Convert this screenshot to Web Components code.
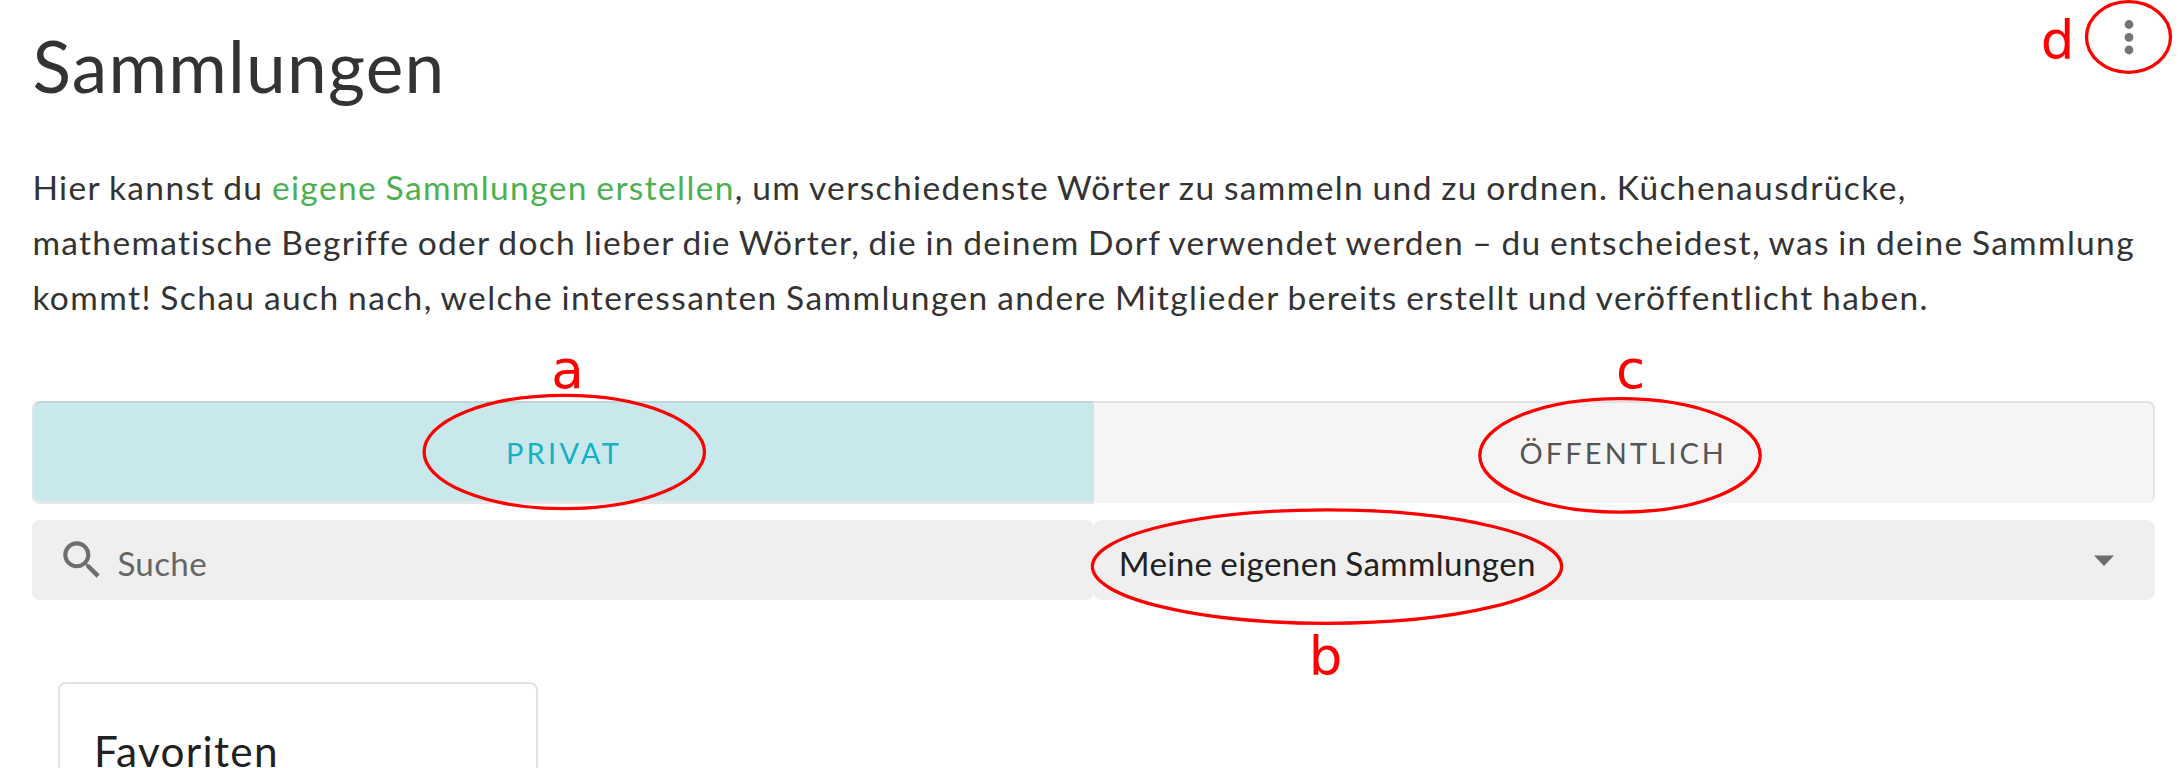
<!DOCTYPE html>
<html lang="de"><head><meta charset="utf-8"><title>Sammlungen</title>
<style>html,body{margin:0;background:#fff;overflow:hidden}body{width:2183px;height:768px;font-family:Lato,"Open Sans",sans-serif;color:#333;position:relative}</style></head>
<body><sammlungen-page></sammlungen-page>
<script>
const define=(name,html)=>customElements.define(name,class extends HTMLElement{
  constructor(){super();this.attachShadow({mode:'open'}).innerHTML=html;}
});
define('page-header',`<style>:host{display:flex;justify-content:space-between;height:134px}
h1{margin:24px 0 0 0;font-size:71.2px;line-height:84px;font-weight:400;letter-spacing:1.25px;color:#333}
svg{display:block;margin:18px 4px 0 0}</style>
<h1><slot></slot></h1><svg width="40" height="40" fill="#757575"><circle cx="18" cy="6.5" r="4.4"/><circle cx="18" cy="19.3" r="4.4"/><circle cx="18" cy="32" r="4.4"/></svg>`);
define('intro-text',`<style>:host{display:block;height:168.5px;margin:25.5px 0 0 0;font-size:33.5px;line-height:55.3px;color:#333;white-space:nowrap}</style><slot></slot>`);
define('text-line',`<style>:host{display:block;word-spacing:-1.5px;letter-spacing:1.38px}:host([tight]){letter-spacing:1.325px}:host([wide]){letter-spacing:1.41px}</style><slot></slot>`);
define('green-link',`<style>:host{display:inline;color:#4caf50}</style><slot></slot>`);
define('toggle-group',`<style>:host{display:flex;margin-top:73px;height:103px}</style><slot></slot>`);
define('toggle-button',`<style>:host{display:flex;width:50%;box-sizing:border-box;height:101.5px;align-items:center;justify-content:center;font-size:29px;letter-spacing:3.1px;color:#555;background:#f5f5f5;border:2px solid #e2e2e2;border-left:0;border-bottom:0;border-radius:0 8px 8px 0}
:host([active]){height:103px;padding-left:1px;letter-spacing:3.3px;color:#12b1c4;background:#c9e8eb;background-clip:padding-box;border:2px solid #dfe3e3;border-top-color:#c1d5d8;border-right:1px solid #dcdfdf;border-bottom:3px solid #e5e8e8;border-radius:8px 0 0 8px}</style><slot></slot>`);
define('filter-row',`<style>:host{display:flex;margin-top:16px;height:80px}</style><slot></slot>`);
define('search-field',`<style>:host{display:flex;flex:1;background:#efefef;border-radius:8px;color:#666;font-size:33.2px;letter-spacing:.3px;line-height:40px}
svg{margin:14.5px 0 0 25px}span{margin:23px 0 0 10px}</style>
<svg width="50" height="50" viewBox="0 0 24 24" fill="#6f6f6f"><path d="M15.5 14h-.79l-.28-.27A6.47 6.47 0 0 0 16 9.5 6.5 6.5 0 1 0 9.5 16c1.61 0 3.09-.59 4.23-1.57l.27.28v.79l5 4.99L20.49 19l-4.99-5zm-6 0C7.01 14 5 11.99 5 9.5S7.01 5 9.5 5 14 7.01 14 9.5 11.99 14 9.5 14z"/></svg><span><slot></slot></span>`);
define('select-field',`<style>:host{display:flex;flex:1;justify-content:space-between;background:#efefef;border-radius:8px;color:#212121;font-size:33.2px;letter-spacing:.4px;word-spacing:-1.2px;line-height:40px}
span{margin:23px 0 0 25px}svg{margin:35px 41px 0 0}</style><span><slot></slot></span><svg width="20" height="12"><path d="M0 .5h20l-10 10.5z" fill="#6c6c6c"/></svg>`);
define('collection-card',`<style>:host{display:block;box-sizing:border-box;width:480px;height:140px;margin:82px 0 0 25.5px;padding:44px 0 0 34px;border:2px solid #e2e2e2;border-radius:8px;color:#212121;font-size:42.3px;line-height:46px;letter-spacing:1.3px}</style><slot></slot>`);
define('callout-layer',`<style>:host{display:block;position:absolute;inset:0}svg{display:block}text{font:53px "DejaVu Sans",sans-serif;fill:red;text-anchor:middle}ellipse{fill:none;stroke:red;stroke-width:3.3}</style>
<svg width="2183" height="768">
<ellipse cx="564.3" cy="452" rx="140.2" ry="56.7"/><ellipse cx="1620" cy="455.4" rx="140.2" ry="56.7"/><ellipse cx="1327" cy="566.6" rx="234.6" ry="56.7"/><ellipse cx="2128.5" cy="37" rx="42" ry="35.3"/>
<text x="567.5" y="387.5">a</text><text x="1630.5" y="388">c</text><text x="1325.7" y="675">b</text><text x="2057.5" y="59">d</text></svg>`);
define('sammlungen-page',`<style>:host{display:block;box-sizing:border-box;height:768px;padding:0 28px 0 32.4px;overflow:hidden}</style>
<page-header>Sammlungen</page-header>
<intro-text><text-line>Hier kannst du <green-link>eigene Sammlungen erstellen</green-link>, um verschiedenste Wörter zu sammeln und zu ordnen. Küchenausdrücke,</text-line><text-line tight>mathematische Begriffe oder doch lieber die Wörter, die in deinem Dorf verwendet werden – du entscheidest, was in deine Sammlung</text-line><text-line wide>kommt! Schau auch nach, welche interessanten Sammlungen andere Mitglieder bereits erstellt und veröffentlicht haben.</text-line></intro-text>
<toggle-group><toggle-button active>PRIVAT</toggle-button><toggle-button>ÖFFENTLICH</toggle-button></toggle-group>
<filter-row><search-field>Suche</search-field><select-field>Meine eigenen Sammlungen</select-field></filter-row>
<collection-card>Favoriten</collection-card>
<callout-layer></callout-layer>`);
</script></body></html>
